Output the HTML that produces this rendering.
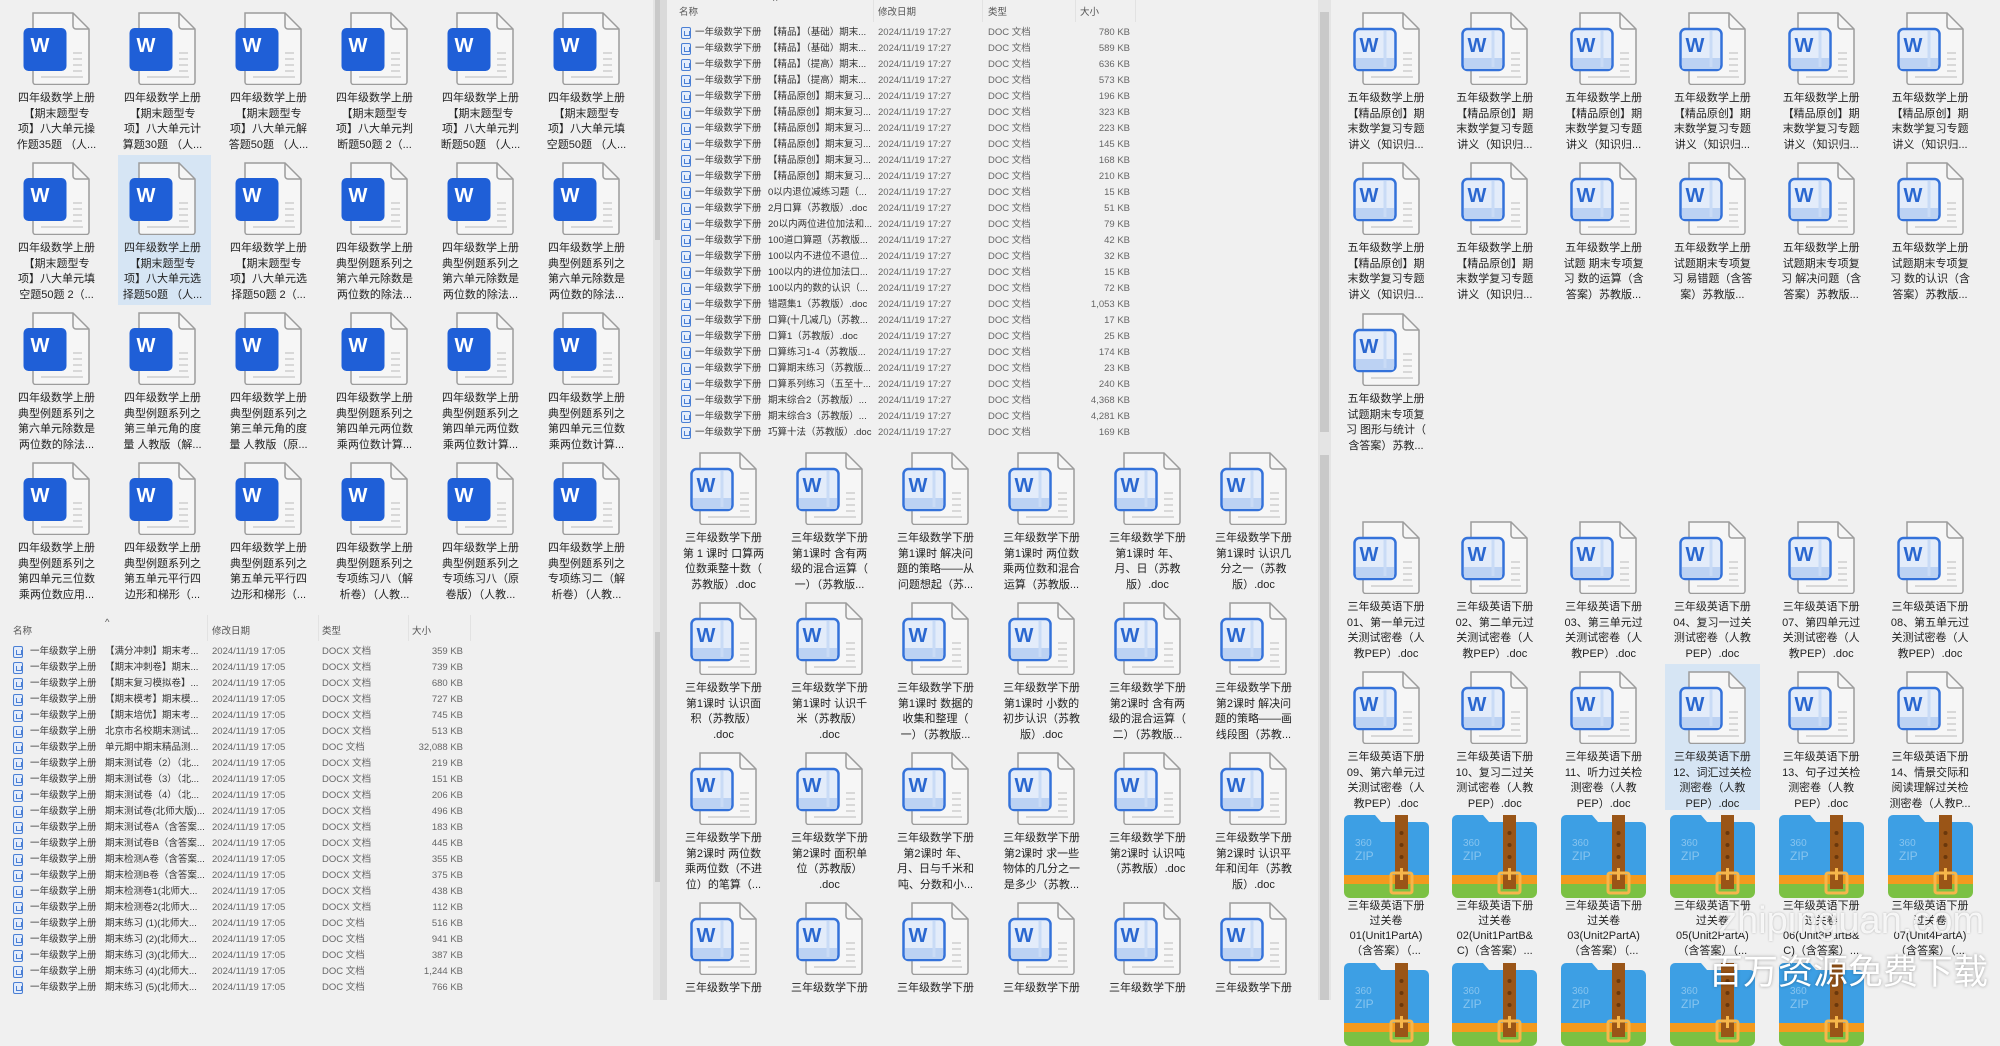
<!DOCTYPE html>
<html><head><meta charset="utf-8">
<style>
*{margin:0;padding:0;box-sizing:border-box}
html,body{width:2000px;height:1000px;overflow:hidden;background:#f0f0f0;font-family:"Liberation Sans","Noto Sans CJK SC",sans-serif}
.c{position:absolute;width:100px;text-align:center}
.c svg{display:block;margin:0 auto;width:67px;height:73px}
.c svg.z{width:85px;height:83px}
.c p{margin-top:6px;font-size:11px;line-height:15.5px;color:#222;white-space:nowrap}
.c p.zp{margin-top:1px;line-height:15px}
.sel{position:absolute;background:#d6e5f4}
.r{position:absolute;height:16px;line-height:16px;font-size:9.5px;white-space:nowrap;color:#333}
.r span{position:absolute;top:0}
.r .i{top:2px;width:10px;height:12px;border:1px solid #4a7fd4;background:#e3ecfb;border-radius:2px}
.r .i::after{content:"";position:absolute;left:2px;top:3px;width:4px;height:4px;border:1px solid #4a7fd4;border-top:none}
.r .d,.r .t,.r .s{color:#666}
.r .s{text-align:right;width:70px}
.h{position:absolute;font-size:9.5px;color:#555;white-space:nowrap}
.vs{position:absolute;background:#e4e4e4}
.th{position:absolute;background:#c9c9c9}
.sep{position:absolute;width:1px;background:#e2e2e2}
</style></head><body>
<svg width="0" height="0" style="position:absolute">
<defs>
<symbol id="w1" viewBox="0 0 67 73">
<path d="M10 1h40l16 16v53a2.5 2.5 0 0 1-2.5 2.5H12.5A2.5 2.5 0 0 1 10 70z" fill="#f6f6f6" stroke="#9c9c9c" stroke-width="1.5"/>
<path d="M50 1v13a3 3 0 0 0 3 3h13" fill="none" stroke="#9c9c9c" stroke-width="1.5"/>
<path d="M50 41h9M50 47h9M50 53h9M50 59h9M18 65h42" stroke="#d8d8d8" stroke-width="2"/>
<rect x="0.5" y="16" width="43" height="43" rx="5" fill="#1f5fd7"/>
<text x="17" y="40" font-size="20" font-weight="bold" fill="#fff" text-anchor="middle" font-family="Liberation Sans">W</text>
</symbol>
<symbol id="w2" viewBox="0 0 67 73">
<path d="M10 1h40l16 16v53a2.5 2.5 0 0 1-2.5 2.5H12.5A2.5 2.5 0 0 1 10 70z" fill="#f6f6f6" stroke="#9c9c9c" stroke-width="1.5"/>
<path d="M50 1v13a3 3 0 0 0 3 3h13" fill="none" stroke="#9c9c9c" stroke-width="1.5"/>
<path d="M50 41h9M50 47h9M50 53h9M50 59h9M18 65h42" stroke="#d8d8d8" stroke-width="2"/>
<rect x="1.5" y="17" width="41" height="41" rx="5" fill="#e3ecfa" stroke="#3472da" stroke-width="2.5"/>
<path d="M3 46h38v9a2 2 0 0 1-2 2H5a2 2 0 0 1-2-2z" fill="#bcd2f3"/>
<path d="M32 19v36" stroke="#c9dbf6" stroke-width="3"/>
<text x="16" y="40" font-size="20" font-weight="bold" fill="#2a67d0" text-anchor="middle" font-family="Liberation Sans">W</text>
</symbol>
<symbol id="zp" viewBox="0 0 85 83">
<path d="M5 0h26l6 7h43a5 5 0 0 1 5 5v50H0V5a5 5 0 0 1 5-5z" fill="#3d9fe4"/>
<rect x="0" y="60" width="85" height="10" fill="#f39a1e"/>
<path d="M0 69h85v8a6 6 0 0 1-6 6H6a6 6 0 0 1-6-6z" fill="#7bc143"/>
<rect x="51" y="0" width="13" height="74" fill="#9a5517"/>
<circle cx="57.5" cy="18" r="2" fill="#6a380c"/><circle cx="57.5" cy="30" r="2" fill="#6a380c"/><circle cx="57.5" cy="42" r="2" fill="#6a380c"/>
<rect x="47" y="58" width="21" height="20" rx="2" fill="none" stroke="#f6b64b" stroke-width="3"/>
<path d="M57.5 53v12" stroke="#f6b64b" stroke-width="3"/>
<text x="11" y="31" font-size="10" fill="#86c4ef" font-family="Liberation Sans">360</text>
<text x="11" y="45" font-size="12" fill="#86c4ef" font-family="Liberation Sans">ZIP</text>
</symbol>
</defs></svg>

<!-- scrollbars -->
<div class="vs" style="left:653px;top:0;width:12px;height:1000px"></div>
<div class="th" style="left:655px;top:0;width:8px;height:240px"></div>
<div class="th" style="left:655px;top:632px;width:8px;height:250px"></div>
<div class="vs" style="left:660px;top:0;width:7px;height:1000px;background:#dadada"></div>
<div class="vs" style="left:1318px;top:0;width:13px;height:1000px"></div>
<div class="th" style="left:1320px;top:12px;width:9px;height:420px"></div>
<div class="th" style="left:1320px;top:455px;width:9px;height:545px"></div>

<!-- selections -->
<div class="sel" style="left:118px;top:155px;width:93px;height:150px"></div>
<div class="sel" style="left:1665px;top:664px;width:95px;height:146px"></div>

<!-- LEFT GRID -->
<div class="c" style="left:6.5px;top:12px"><svg><use href="#w1"/></svg><p>四年级数学上册<br>【期末题型专<br>项】八大单元操<br>作题35题 （人...</p></div>
<div class="c" style="left:112.5px;top:12px"><svg><use href="#w1"/></svg><p>四年级数学上册<br>【期末题型专<br>项】八大单元计<br>算题30题 （人...</p></div>
<div class="c" style="left:218.5px;top:12px"><svg><use href="#w1"/></svg><p>四年级数学上册<br>【期末题型专<br>项】八大单元解<br>答题50题 （人...</p></div>
<div class="c" style="left:324.5px;top:12px"><svg><use href="#w1"/></svg><p>四年级数学上册<br>【期末题型专<br>项】八大单元判<br>断题50题 2（...</p></div>
<div class="c" style="left:430.5px;top:12px"><svg><use href="#w1"/></svg><p>四年级数学上册<br>【期末题型专<br>项】八大单元判<br>断题50题 （人...</p></div>
<div class="c" style="left:536.5px;top:12px"><svg><use href="#w1"/></svg><p>四年级数学上册<br>【期末题型专<br>项】八大单元填<br>空题50题 （人...</p></div>

<div class="c" style="left:6.5px;top:162px"><svg><use href="#w1"/></svg><p>四年级数学上册<br>【期末题型专<br>项】八大单元填<br>空题50题 2（...</p></div>
<div class="c" style="left:112.5px;top:162px"><svg><use href="#w1"/></svg><p>四年级数学上册<br>【期末题型专<br>项】八大单元选<br>择题50题 （人...</p></div>
<div class="c" style="left:218.5px;top:162px"><svg><use href="#w1"/></svg><p>四年级数学上册<br>【期末题型专<br>项】八大单元选<br>择题50题 2（...</p></div>
<div class="c" style="left:324.5px;top:162px"><svg><use href="#w1"/></svg><p>四年级数学上册<br>典型例题系列之<br>第六单元除数是<br>两位数的除法...</p></div>
<div class="c" style="left:430.5px;top:162px"><svg><use href="#w1"/></svg><p>四年级数学上册<br>典型例题系列之<br>第六单元除数是<br>两位数的除法...</p></div>
<div class="c" style="left:536.5px;top:162px"><svg><use href="#w1"/></svg><p>四年级数学上册<br>典型例题系列之<br>第六单元除数是<br>两位数的除法...</p></div>

<div class="c" style="left:6.5px;top:312px"><svg><use href="#w1"/></svg><p>四年级数学上册<br>典型例题系列之<br>第六单元除数是<br>两位数的除法...</p></div>
<div class="c" style="left:112.5px;top:312px"><svg><use href="#w1"/></svg><p>四年级数学上册<br>典型例题系列之<br>第三单元角的度<br>量 人教版（解...</p></div>
<div class="c" style="left:218.5px;top:312px"><svg><use href="#w1"/></svg><p>四年级数学上册<br>典型例题系列之<br>第三单元角的度<br>量 人教版（原...</p></div>
<div class="c" style="left:324.5px;top:312px"><svg><use href="#w1"/></svg><p>四年级数学上册<br>典型例题系列之<br>第四单元两位数<br>乘两位数计算...</p></div>
<div class="c" style="left:430.5px;top:312px"><svg><use href="#w1"/></svg><p>四年级数学上册<br>典型例题系列之<br>第四单元两位数<br>乘两位数计算...</p></div>
<div class="c" style="left:536.5px;top:312px"><svg><use href="#w1"/></svg><p>四年级数学上册<br>典型例题系列之<br>第四单元三位数<br>乘两位数计算...</p></div>

<div class="c" style="left:6.5px;top:462px"><svg><use href="#w1"/></svg><p>四年级数学上册<br>典型例题系列之<br>第四单元三位数<br>乘两位数应用...</p></div>
<div class="c" style="left:112.5px;top:462px"><svg><use href="#w1"/></svg><p>四年级数学上册<br>典型例题系列之<br>第五单元平行四<br>边形和梯形（...</p></div>
<div class="c" style="left:218.5px;top:462px"><svg><use href="#w1"/></svg><p>四年级数学上册<br>典型例题系列之<br>第五单元平行四<br>边形和梯形（...</p></div>
<div class="c" style="left:324.5px;top:462px"><svg><use href="#w1"/></svg><p>四年级数学上册<br>典型例题系列之<br>专项练习八（解<br>析卷）（人教...</p></div>
<div class="c" style="left:430.5px;top:462px"><svg><use href="#w1"/></svg><p>四年级数学上册<br>典型例题系列之<br>专项练习八（原<br>卷版）（人教...</p></div>
<div class="c" style="left:536.5px;top:462px"><svg><use href="#w1"/></svg><p>四年级数学上册<br>典型例题系列之<br>专项练习二（解<br>析卷）（人教...</p></div>

<!-- LEFT LIST -->
<div style="position:absolute;left:0;top:612px;width:653px;height:388px;background:#f0f0f0"></div>
<div class="h" style="left:13px;top:623px">名称</div>
<div class="h" style="left:105px;top:617px">^</div>
<div class="h" style="left:212px;top:623px">修改日期</div>
<div class="h" style="left:322px;top:623px">类型</div>
<div class="h" style="left:412px;top:623px">大小</div>
<div class="sep" style="left:207px;top:615px;height:26px"></div>
<div class="sep" style="left:318px;top:615px;height:26px"></div>
<div class="sep" style="left:408px;top:615px;height:26px"></div>
<div class="sep" style="left:470px;top:615px;height:26px"></div>

<div class="r" style="left:0;top:644px;width:480px"><span class="i" style="left:13px"></span><span style="left:30px">一年级数学上册</span><span style="left:105px">【满分冲刺】期末考...</span><span class="d" style="left:212px">2024/11/19 17:05</span><span class="t" style="left:322px">DOCX 文档</span><span class="s" style="left:393px">359 KB</span></div>
<div class="r" style="left:0;top:660px;width:480px"><span class="i" style="left:13px"></span><span style="left:30px">一年级数学上册</span><span style="left:105px">【期末冲刺卷】期末...</span><span class="d" style="left:212px">2024/11/19 17:05</span><span class="t" style="left:322px">DOCX 文档</span><span class="s" style="left:393px">739 KB</span></div>
<div class="r" style="left:0;top:676px;width:480px"><span class="i" style="left:13px"></span><span style="left:30px">一年级数学上册</span><span style="left:105px">【期末复习模拟卷】...</span><span class="d" style="left:212px">2024/11/19 17:05</span><span class="t" style="left:322px">DOCX 文档</span><span class="s" style="left:393px">680 KB</span></div>
<div class="r" style="left:0;top:692px;width:480px"><span class="i" style="left:13px"></span><span style="left:30px">一年级数学上册</span><span style="left:105px">【期末模考】期末模...</span><span class="d" style="left:212px">2024/11/19 17:05</span><span class="t" style="left:322px">DOCX 文档</span><span class="s" style="left:393px">727 KB</span></div>
<div class="r" style="left:0;top:708px;width:480px"><span class="i" style="left:13px"></span><span style="left:30px">一年级数学上册</span><span style="left:105px">【期末培优】期末考...</span><span class="d" style="left:212px">2024/11/19 17:05</span><span class="t" style="left:322px">DOCX 文档</span><span class="s" style="left:393px">745 KB</span></div>
<div class="r" style="left:0;top:724px;width:480px"><span class="i" style="left:13px"></span><span style="left:30px">一年级数学上册</span><span style="left:105px">北京市名校期末测试...</span><span class="d" style="left:212px">2024/11/19 17:05</span><span class="t" style="left:322px">DOCX 文档</span><span class="s" style="left:393px">513 KB</span></div>
<div class="r" style="left:0;top:740px;width:480px"><span class="i" style="left:13px"></span><span style="left:30px">一年级数学上册</span><span style="left:105px">单元期中期末精品测...</span><span class="d" style="left:212px">2024/11/19 17:05</span><span class="t" style="left:322px">DOC 文档</span><span class="s" style="left:393px">32,088 KB</span></div>
<div class="r" style="left:0;top:756px;width:480px"><span class="i" style="left:13px"></span><span style="left:30px">一年级数学上册</span><span style="left:105px">期末测试卷（2）（北...</span><span class="d" style="left:212px">2024/11/19 17:05</span><span class="t" style="left:322px">DOCX 文档</span><span class="s" style="left:393px">219 KB</span></div>
<div class="r" style="left:0;top:772px;width:480px"><span class="i" style="left:13px"></span><span style="left:30px">一年级数学上册</span><span style="left:105px">期末测试卷（3）（北...</span><span class="d" style="left:212px">2024/11/19 17:05</span><span class="t" style="left:322px">DOCX 文档</span><span class="s" style="left:393px">151 KB</span></div>
<div class="r" style="left:0;top:788px;width:480px"><span class="i" style="left:13px"></span><span style="left:30px">一年级数学上册</span><span style="left:105px">期末测试卷（4）（北...</span><span class="d" style="left:212px">2024/11/19 17:05</span><span class="t" style="left:322px">DOCX 文档</span><span class="s" style="left:393px">206 KB</span></div>
<div class="r" style="left:0;top:804px;width:480px"><span class="i" style="left:13px"></span><span style="left:30px">一年级数学上册</span><span style="left:105px">期末测试卷(北师大版)...</span><span class="d" style="left:212px">2024/11/19 17:05</span><span class="t" style="left:322px">DOCX 文档</span><span class="s" style="left:393px">496 KB</span></div>
<div class="r" style="left:0;top:820px;width:480px"><span class="i" style="left:13px"></span><span style="left:30px">一年级数学上册</span><span style="left:105px">期末测试卷A（含答案...</span><span class="d" style="left:212px">2024/11/19 17:05</span><span class="t" style="left:322px">DOCX 文档</span><span class="s" style="left:393px">183 KB</span></div>
<div class="r" style="left:0;top:836px;width:480px"><span class="i" style="left:13px"></span><span style="left:30px">一年级数学上册</span><span style="left:105px">期末测试卷B（含答案...</span><span class="d" style="left:212px">2024/11/19 17:05</span><span class="t" style="left:322px">DOCX 文档</span><span class="s" style="left:393px">445 KB</span></div>
<div class="r" style="left:0;top:852px;width:480px"><span class="i" style="left:13px"></span><span style="left:30px">一年级数学上册</span><span style="left:105px">期末检测A卷（含答案...</span><span class="d" style="left:212px">2024/11/19 17:05</span><span class="t" style="left:322px">DOCX 文档</span><span class="s" style="left:393px">355 KB</span></div>
<div class="r" style="left:0;top:868px;width:480px"><span class="i" style="left:13px"></span><span style="left:30px">一年级数学上册</span><span style="left:105px">期末检测B卷（含答案...</span><span class="d" style="left:212px">2024/11/19 17:05</span><span class="t" style="left:322px">DOCX 文档</span><span class="s" style="left:393px">375 KB</span></div>
<div class="r" style="left:0;top:884px;width:480px"><span class="i" style="left:13px"></span><span style="left:30px">一年级数学上册</span><span style="left:105px">期末检测卷1(北师大...</span><span class="d" style="left:212px">2024/11/19 17:05</span><span class="t" style="left:322px">DOCX 文档</span><span class="s" style="left:393px">438 KB</span></div>
<div class="r" style="left:0;top:900px;width:480px"><span class="i" style="left:13px"></span><span style="left:30px">一年级数学上册</span><span style="left:105px">期末检测卷2(北师大...</span><span class="d" style="left:212px">2024/11/19 17:05</span><span class="t" style="left:322px">DOCX 文档</span><span class="s" style="left:393px">112 KB</span></div>
<div class="r" style="left:0;top:916px;width:480px"><span class="i" style="left:13px"></span><span style="left:30px">一年级数学上册</span><span style="left:105px">期末练习 (1)(北师大...</span><span class="d" style="left:212px">2024/11/19 17:05</span><span class="t" style="left:322px">DOC 文档</span><span class="s" style="left:393px">516 KB</span></div>
<div class="r" style="left:0;top:932px;width:480px"><span class="i" style="left:13px"></span><span style="left:30px">一年级数学上册</span><span style="left:105px">期末练习 (2)(北师大...</span><span class="d" style="left:212px">2024/11/19 17:05</span><span class="t" style="left:322px">DOC 文档</span><span class="s" style="left:393px">941 KB</span></div>
<div class="r" style="left:0;top:948px;width:480px"><span class="i" style="left:13px"></span><span style="left:30px">一年级数学上册</span><span style="left:105px">期末练习 (3)(北师大...</span><span class="d" style="left:212px">2024/11/19 17:05</span><span class="t" style="left:322px">DOC 文档</span><span class="s" style="left:393px">387 KB</span></div>
<div class="r" style="left:0;top:964px;width:480px"><span class="i" style="left:13px"></span><span style="left:30px">一年级数学上册</span><span style="left:105px">期末练习 (4)(北师大...</span><span class="d" style="left:212px">2024/11/19 17:05</span><span class="t" style="left:322px">DOC 文档</span><span class="s" style="left:393px">1,244 KB</span></div>
<div class="r" style="left:0;top:980px;width:480px"><span class="i" style="left:13px"></span><span style="left:30px">一年级数学上册</span><span style="left:105px">期末练习 (5)(北师大...</span><span class="d" style="left:212px">2024/11/19 17:05</span><span class="t" style="left:322px">DOC 文档</span><span class="s" style="left:393px">766 KB</span></div>

<!-- MIDDLE LIST -->
<div class="h" style="left:679px;top:4px">名称</div>
<div class="h" style="left:773px;top:-4px">^</div>
<div class="h" style="left:878px;top:4px">修改日期</div>
<div class="h" style="left:988px;top:4px">类型</div>
<div class="h" style="left:1080px;top:4px">大小</div>
<div class="sep" style="left:873px;top:0;height:22px"></div>
<div class="sep" style="left:982px;top:0;height:22px"></div>
<div class="sep" style="left:1075px;top:0;height:22px"></div>
<div class="sep" style="left:1135px;top:0;height:22px"></div>

<div class="r" style="left:668px;top:25px;width:480px"><span class="i" style="left:13px"></span><span style="left:27px">一年级数学下册</span><span style="left:100px">【精品】（基础）期末...</span><span class="d" style="left:210px">2024/11/19 17:27</span><span class="t" style="left:320px">DOC 文档</span><span class="s" style="left:392px">780 KB</span></div>
<div class="r" style="left:668px;top:41px;width:480px"><span class="i" style="left:13px"></span><span style="left:27px">一年级数学下册</span><span style="left:100px">【精品】（基础）期末...</span><span class="d" style="left:210px">2024/11/19 17:27</span><span class="t" style="left:320px">DOC 文档</span><span class="s" style="left:392px">589 KB</span></div>
<div class="r" style="left:668px;top:57px;width:480px"><span class="i" style="left:13px"></span><span style="left:27px">一年级数学下册</span><span style="left:100px">【精品】（提高）期末...</span><span class="d" style="left:210px">2024/11/19 17:27</span><span class="t" style="left:320px">DOC 文档</span><span class="s" style="left:392px">636 KB</span></div>
<div class="r" style="left:668px;top:73px;width:480px"><span class="i" style="left:13px"></span><span style="left:27px">一年级数学下册</span><span style="left:100px">【精品】（提高）期末...</span><span class="d" style="left:210px">2024/11/19 17:27</span><span class="t" style="left:320px">DOC 文档</span><span class="s" style="left:392px">573 KB</span></div>
<div class="r" style="left:668px;top:89px;width:480px"><span class="i" style="left:13px"></span><span style="left:27px">一年级数学下册</span><span style="left:100px">【精品原创】期末复习...</span><span class="d" style="left:210px">2024/11/19 17:27</span><span class="t" style="left:320px">DOC 文档</span><span class="s" style="left:392px">196 KB</span></div>
<div class="r" style="left:668px;top:105px;width:480px"><span class="i" style="left:13px"></span><span style="left:27px">一年级数学下册</span><span style="left:100px">【精品原创】期末复习...</span><span class="d" style="left:210px">2024/11/19 17:27</span><span class="t" style="left:320px">DOC 文档</span><span class="s" style="left:392px">323 KB</span></div>
<div class="r" style="left:668px;top:121px;width:480px"><span class="i" style="left:13px"></span><span style="left:27px">一年级数学下册</span><span style="left:100px">【精品原创】期末复习...</span><span class="d" style="left:210px">2024/11/19 17:27</span><span class="t" style="left:320px">DOC 文档</span><span class="s" style="left:392px">223 KB</span></div>
<div class="r" style="left:668px;top:137px;width:480px"><span class="i" style="left:13px"></span><span style="left:27px">一年级数学下册</span><span style="left:100px">【精品原创】期末复习...</span><span class="d" style="left:210px">2024/11/19 17:27</span><span class="t" style="left:320px">DOC 文档</span><span class="s" style="left:392px">145 KB</span></div>
<div class="r" style="left:668px;top:153px;width:480px"><span class="i" style="left:13px"></span><span style="left:27px">一年级数学下册</span><span style="left:100px">【精品原创】期末复习...</span><span class="d" style="left:210px">2024/11/19 17:27</span><span class="t" style="left:320px">DOC 文档</span><span class="s" style="left:392px">168 KB</span></div>
<div class="r" style="left:668px;top:169px;width:480px"><span class="i" style="left:13px"></span><span style="left:27px">一年级数学下册</span><span style="left:100px">【精品原创】期末复习...</span><span class="d" style="left:210px">2024/11/19 17:27</span><span class="t" style="left:320px">DOC 文档</span><span class="s" style="left:392px">210 KB</span></div>
<div class="r" style="left:668px;top:185px;width:480px"><span class="i" style="left:13px"></span><span style="left:27px">一年级数学下册</span><span style="left:100px">0以内退位减练习题（...</span><span class="d" style="left:210px">2024/11/19 17:27</span><span class="t" style="left:320px">DOC 文档</span><span class="s" style="left:392px">15 KB</span></div>
<div class="r" style="left:668px;top:201px;width:480px"><span class="i" style="left:13px"></span><span style="left:27px">一年级数学下册</span><span style="left:100px">2月口算（苏教版）.doc</span><span class="d" style="left:210px">2024/11/19 17:27</span><span class="t" style="left:320px">DOC 文档</span><span class="s" style="left:392px">51 KB</span></div>
<div class="r" style="left:668px;top:217px;width:480px"><span class="i" style="left:13px"></span><span style="left:27px">一年级数学下册</span><span style="left:100px">20以内两位进位加法和...</span><span class="d" style="left:210px">2024/11/19 17:27</span><span class="t" style="left:320px">DOC 文档</span><span class="s" style="left:392px">79 KB</span></div>
<div class="r" style="left:668px;top:233px;width:480px"><span class="i" style="left:13px"></span><span style="left:27px">一年级数学下册</span><span style="left:100px">100道口算题（苏教版...</span><span class="d" style="left:210px">2024/11/19 17:27</span><span class="t" style="left:320px">DOC 文档</span><span class="s" style="left:392px">42 KB</span></div>
<div class="r" style="left:668px;top:249px;width:480px"><span class="i" style="left:13px"></span><span style="left:27px">一年级数学下册</span><span style="left:100px">100以内不进位不退位...</span><span class="d" style="left:210px">2024/11/19 17:27</span><span class="t" style="left:320px">DOC 文档</span><span class="s" style="left:392px">32 KB</span></div>
<div class="r" style="left:668px;top:265px;width:480px"><span class="i" style="left:13px"></span><span style="left:27px">一年级数学下册</span><span style="left:100px">100以内的进位加法口...</span><span class="d" style="left:210px">2024/11/19 17:27</span><span class="t" style="left:320px">DOC 文档</span><span class="s" style="left:392px">15 KB</span></div>
<div class="r" style="left:668px;top:281px;width:480px"><span class="i" style="left:13px"></span><span style="left:27px">一年级数学下册</span><span style="left:100px">100以内的数的认识（...</span><span class="d" style="left:210px">2024/11/19 17:27</span><span class="t" style="left:320px">DOC 文档</span><span class="s" style="left:392px">72 KB</span></div>
<div class="r" style="left:668px;top:297px;width:480px"><span class="i" style="left:13px"></span><span style="left:27px">一年级数学下册</span><span style="left:100px">错题集1（苏教版）.doc</span><span class="d" style="left:210px">2024/11/19 17:27</span><span class="t" style="left:320px">DOC 文档</span><span class="s" style="left:392px">1,053 KB</span></div>
<div class="r" style="left:668px;top:313px;width:480px"><span class="i" style="left:13px"></span><span style="left:27px">一年级数学下册</span><span style="left:100px">口算(十几减几)（苏教...</span><span class="d" style="left:210px">2024/11/19 17:27</span><span class="t" style="left:320px">DOC 文档</span><span class="s" style="left:392px">17 KB</span></div>
<div class="r" style="left:668px;top:329px;width:480px"><span class="i" style="left:13px"></span><span style="left:27px">一年级数学下册</span><span style="left:100px">口算1（苏教版）.doc</span><span class="d" style="left:210px">2024/11/19 17:27</span><span class="t" style="left:320px">DOC 文档</span><span class="s" style="left:392px">25 KB</span></div>
<div class="r" style="left:668px;top:345px;width:480px"><span class="i" style="left:13px"></span><span style="left:27px">一年级数学下册</span><span style="left:100px">口算练习1-4（苏教版...</span><span class="d" style="left:210px">2024/11/19 17:27</span><span class="t" style="left:320px">DOC 文档</span><span class="s" style="left:392px">174 KB</span></div>
<div class="r" style="left:668px;top:361px;width:480px"><span class="i" style="left:13px"></span><span style="left:27px">一年级数学下册</span><span style="left:100px">口算期末练习（苏教版...</span><span class="d" style="left:210px">2024/11/19 17:27</span><span class="t" style="left:320px">DOC 文档</span><span class="s" style="left:392px">23 KB</span></div>
<div class="r" style="left:668px;top:377px;width:480px"><span class="i" style="left:13px"></span><span style="left:27px">一年级数学下册</span><span style="left:100px">口算系列练习（五至十...</span><span class="d" style="left:210px">2024/11/19 17:27</span><span class="t" style="left:320px">DOC 文档</span><span class="s" style="left:392px">240 KB</span></div>
<div class="r" style="left:668px;top:393px;width:480px"><span class="i" style="left:13px"></span><span style="left:27px">一年级数学下册</span><span style="left:100px">期末综合2（苏教版）...</span><span class="d" style="left:210px">2024/11/19 17:27</span><span class="t" style="left:320px">DOC 文档</span><span class="s" style="left:392px">4,368 KB</span></div>
<div class="r" style="left:668px;top:409px;width:480px"><span class="i" style="left:13px"></span><span style="left:27px">一年级数学下册</span><span style="left:100px">期末综合3（苏教版）...</span><span class="d" style="left:210px">2024/11/19 17:27</span><span class="t" style="left:320px">DOC 文档</span><span class="s" style="left:392px">4,281 KB</span></div>
<div class="r" style="left:668px;top:425px;width:480px"><span class="i" style="left:13px"></span><span style="left:27px">一年级数学下册</span><span style="left:100px">巧算十法（苏教版）.doc</span><span class="d" style="left:210px">2024/11/19 17:27</span><span class="t" style="left:320px">DOC 文档</span><span class="s" style="left:392px">169 KB</span></div>

<!-- MIDDLE GRID -->
<div class="c" style="left:673.5px;top:452px"><svg><use href="#w2"/></svg><p>三年级数学下册<br>第 1 课时 口算两<br>位数乘整十数（<br>苏教版）.doc</p></div>
<div class="c" style="left:779.5px;top:452px"><svg><use href="#w2"/></svg><p>三年级数学下册<br>第1课时 含有两<br>级的混合运算（<br>一）（苏教版...</p></div>
<div class="c" style="left:885.5px;top:452px"><svg><use href="#w2"/></svg><p>三年级数学下册<br>第1课时 解决问<br>题的策略——从<br>问题想起（苏...</p></div>
<div class="c" style="left:991.5px;top:452px"><svg><use href="#w2"/></svg><p>三年级数学下册<br>第1课时 两位数<br>乘两位数和混合<br>运算（苏教版...</p></div>
<div class="c" style="left:1097.5px;top:452px"><svg><use href="#w2"/></svg><p>三年级数学下册<br>第1课时 年、<br>月、日（苏教<br>版）.doc</p></div>
<div class="c" style="left:1203.5px;top:452px"><svg><use href="#w2"/></svg><p>三年级数学下册<br>第1课时 认识几<br>分之一（苏教<br>版）.doc</p></div>

<div class="c" style="left:673.5px;top:602px"><svg><use href="#w2"/></svg><p>三年级数学下册<br>第1课时 认识面<br>积（苏教版）<br>.doc</p></div>
<div class="c" style="left:779.5px;top:602px"><svg><use href="#w2"/></svg><p>三年级数学下册<br>第1课时 认识千<br>米（苏教版）<br>.doc</p></div>
<div class="c" style="left:885.5px;top:602px"><svg><use href="#w2"/></svg><p>三年级数学下册<br>第1课时 数据的<br>收集和整理（<br>一）（苏教版...</p></div>
<div class="c" style="left:991.5px;top:602px"><svg><use href="#w2"/></svg><p>三年级数学下册<br>第1课时 小数的<br>初步认识（苏教<br>版）.doc</p></div>
<div class="c" style="left:1097.5px;top:602px"><svg><use href="#w2"/></svg><p>三年级数学下册<br>第2课时 含有两<br>级的混合运算（<br>二）（苏教版...</p></div>
<div class="c" style="left:1203.5px;top:602px"><svg><use href="#w2"/></svg><p>三年级数学下册<br>第2课时 解决问<br>题的策略——画<br>线段图（苏教...</p></div>

<div class="c" style="left:673.5px;top:752px"><svg><use href="#w2"/></svg><p>三年级数学下册<br>第2课时 两位数<br>乘两位数（不进<br>位）的笔算（...</p></div>
<div class="c" style="left:779.5px;top:752px"><svg><use href="#w2"/></svg><p>三年级数学下册<br>第2课时 面积单<br>位（苏教版）<br>.doc</p></div>
<div class="c" style="left:885.5px;top:752px"><svg><use href="#w2"/></svg><p>三年级数学下册<br>第2课时 年、<br>月、日与千米和<br>吨、分数和小...</p></div>
<div class="c" style="left:991.5px;top:752px"><svg><use href="#w2"/></svg><p>三年级数学下册<br>第2课时 求一些<br>物体的几分之一<br>是多少（苏教...</p></div>
<div class="c" style="left:1097.5px;top:752px"><svg><use href="#w2"/></svg><p>三年级数学下册<br>第2课时 认识吨<br>（苏教版）.doc</p></div>
<div class="c" style="left:1203.5px;top:752px"><svg><use href="#w2"/></svg><p>三年级数学下册<br>第2课时 认识平<br>年和闰年（苏教<br>版）.doc</p></div>

<div class="c" style="left:673.5px;top:902px"><svg><use href="#w2"/></svg><p>三年级数学下册</p></div>
<div class="c" style="left:779.5px;top:902px"><svg><use href="#w2"/></svg><p>三年级数学下册</p></div>
<div class="c" style="left:885.5px;top:902px"><svg><use href="#w2"/></svg><p>三年级数学下册</p></div>
<div class="c" style="left:991.5px;top:902px"><svg><use href="#w2"/></svg><p>三年级数学下册</p></div>
<div class="c" style="left:1097.5px;top:902px"><svg><use href="#w2"/></svg><p>三年级数学下册</p></div>
<div class="c" style="left:1203.5px;top:902px"><svg><use href="#w2"/></svg><p>三年级数学下册</p></div>

<!-- RIGHT GRID -->
<div class="c" style="left:1336px;top:12px"><svg><use href="#w2"/></svg><p>五年级数学上册<br>【精品原创】期<br>末数学复习专题<br>讲义（知识归...</p></div>
<div class="c" style="left:1444.8px;top:12px"><svg><use href="#w2"/></svg><p>五年级数学上册<br>【精品原创】期<br>末数学复习专题<br>讲义（知识归...</p></div>
<div class="c" style="left:1553.6px;top:12px"><svg><use href="#w2"/></svg><p>五年级数学上册<br>【精品原创】期<br>末数学复习专题<br>讲义（知识归...</p></div>
<div class="c" style="left:1662.4px;top:12px"><svg><use href="#w2"/></svg><p>五年级数学上册<br>【精品原创】期<br>末数学复习专题<br>讲义（知识归...</p></div>
<div class="c" style="left:1771.2px;top:12px"><svg><use href="#w2"/></svg><p>五年级数学上册<br>【精品原创】期<br>末数学复习专题<br>讲义（知识归...</p></div>
<div class="c" style="left:1880px;top:12px"><svg><use href="#w2"/></svg><p>五年级数学上册<br>【精品原创】期<br>末数学复习专题<br>讲义（知识归...</p></div>

<div class="c" style="left:1336px;top:162px"><svg><use href="#w2"/></svg><p>五年级数学上册<br>【精品原创】期<br>末数学复习专题<br>讲义（知识归...</p></div>
<div class="c" style="left:1444.8px;top:162px"><svg><use href="#w2"/></svg><p>五年级数学上册<br>【精品原创】期<br>末数学复习专题<br>讲义（知识归...</p></div>
<div class="c" style="left:1553.6px;top:162px"><svg><use href="#w2"/></svg><p>五年级数学上册<br>试题 期末专项复<br>习 数的运算（含<br>答案）苏教版...</p></div>
<div class="c" style="left:1662.4px;top:162px"><svg><use href="#w2"/></svg><p>五年级数学上册<br>试题期末专项复<br>习 易错题（含答<br>案）苏教版...</p></div>
<div class="c" style="left:1771.2px;top:162px"><svg><use href="#w2"/></svg><p>五年级数学上册<br>试题期末专项复<br>习 解决问题（含<br>答案）苏教版...</p></div>
<div class="c" style="left:1880px;top:162px"><svg><use href="#w2"/></svg><p>五年级数学上册<br>试题期末专项复<br>习 数的认识（含<br>答案）苏教版...</p></div>

<div class="c" style="left:1336px;top:313px"><svg><use href="#w2"/></svg><p>五年级数学上册<br>试题期末专项复<br>习 图形与统计（<br>含答案）苏教...</p></div>

<div class="c" style="left:1336px;top:521px"><svg><use href="#w2"/></svg><p>三年级英语下册<br>01、第一单元过<br>关测试密卷（人<br>教PEP）.doc</p></div>
<div class="c" style="left:1444.8px;top:521px"><svg><use href="#w2"/></svg><p>三年级英语下册<br>02、第二单元过<br>关测试密卷（人<br>教PEP）.doc</p></div>
<div class="c" style="left:1553.6px;top:521px"><svg><use href="#w2"/></svg><p>三年级英语下册<br>03、第三单元过<br>关测试密卷（人<br>教PEP）.doc</p></div>
<div class="c" style="left:1662.4px;top:521px"><svg><use href="#w2"/></svg><p>三年级英语下册<br>04、复习一过关<br>测试密卷（人教<br>PEP）.doc</p></div>
<div class="c" style="left:1771.2px;top:521px"><svg><use href="#w2"/></svg><p>三年级英语下册<br>07、第四单元过<br>关测试密卷（人<br>教PEP）.doc</p></div>
<div class="c" style="left:1880px;top:521px"><svg><use href="#w2"/></svg><p>三年级英语下册<br>08、第五单元过<br>关测试密卷（人<br>教PEP）.doc</p></div>

<div class="c" style="left:1336px;top:671px"><svg><use href="#w2"/></svg><p>三年级英语下册<br>09、第六单元过<br>关测试密卷（人<br>教PEP）.doc</p></div>
<div class="c" style="left:1444.8px;top:671px"><svg><use href="#w2"/></svg><p>三年级英语下册<br>10、复习二过关<br>测试密卷（人教<br>PEP）.doc</p></div>
<div class="c" style="left:1553.6px;top:671px"><svg><use href="#w2"/></svg><p>三年级英语下册<br>11、听力过关检<br>测密卷（人教<br>PEP）.doc</p></div>
<div class="c" style="left:1662.4px;top:671px"><svg><use href="#w2"/></svg><p>三年级英语下册<br>12、词汇过关检<br>测密卷（人教<br>PEP）.doc</p></div>
<div class="c" style="left:1771.2px;top:671px"><svg><use href="#w2"/></svg><p>三年级英语下册<br>13、句子过关检<br>测密卷（人教<br>PEP）.doc</p></div>
<div class="c" style="left:1880px;top:671px"><svg><use href="#w2"/></svg><p>三年级英语下册<br>14、情景交际和<br>阅读理解过关检<br>测密卷（人教P...</p></div>

<div class="c" style="left:1336px;top:815px"><svg class="z"><use href="#zp"/></svg><p class="zp">三年级英语下册<br>过关卷<br>01(Unit1PartA)<br>（含答案）（...</p></div>
<div class="c" style="left:1444.8px;top:815px"><svg class="z"><use href="#zp"/></svg><p class="zp">三年级英语下册<br>过关卷<br>02(Unit1PartB&amp;<br>C)（含答案）...</p></div>
<div class="c" style="left:1553.6px;top:815px"><svg class="z"><use href="#zp"/></svg><p class="zp">三年级英语下册<br>过关卷<br>03(Unit2PartA)<br>（含答案）（...</p></div>
<div class="c" style="left:1662.4px;top:815px"><svg class="z"><use href="#zp"/></svg><p class="zp">三年级英语下册<br>过关卷<br>05(Unit2PartA)<br>（含答案）（...</p></div>
<div class="c" style="left:1771.2px;top:815px"><svg class="z"><use href="#zp"/></svg><p class="zp">三年级英语下册<br>过关卷<br>06(Unit3PartB&amp;<br>C)（含答案）...</p></div>
<div class="c" style="left:1880px;top:815px"><svg class="z"><use href="#zp"/></svg><p class="zp">三年级英语下册<br>过关卷<br>07(Unit4PartA)<br>（含答案）（...</p></div>

<div class="c" style="left:1336px;top:963px"><svg class="z"><use href="#zp"/></svg></div>
<div class="c" style="left:1444.8px;top:963px"><svg class="z"><use href="#zp"/></svg></div>
<div class="c" style="left:1553.6px;top:963px"><svg class="z"><use href="#zp"/></svg></div>
<div class="c" style="left:1662.4px;top:963px"><svg class="z"><use href="#zp"/></svg></div>
<div class="c" style="left:1771.2px;top:963px"><svg class="z"><use href="#zp"/></svg></div>

<!-- watermark -->
<div style="position:absolute;left:1718px;top:900px;font-size:38px;color:rgba(255,255,255,0.85);font-family:'Liberation Sans',sans-serif;white-space:nowrap;text-shadow:0 0 2px rgba(0,0,0,0.25)">zhipinguan.com</div>
<div style="position:absolute;left:1708px;top:952px;font-size:35px;line-height:42px;color:#fff;font-family:'Liberation Sans','Noto Sans CJK SC',sans-serif;white-space:nowrap;text-shadow:0 0 3px rgba(0,0,0,0.35)">百万资源免费下载</div>
</body></html>
